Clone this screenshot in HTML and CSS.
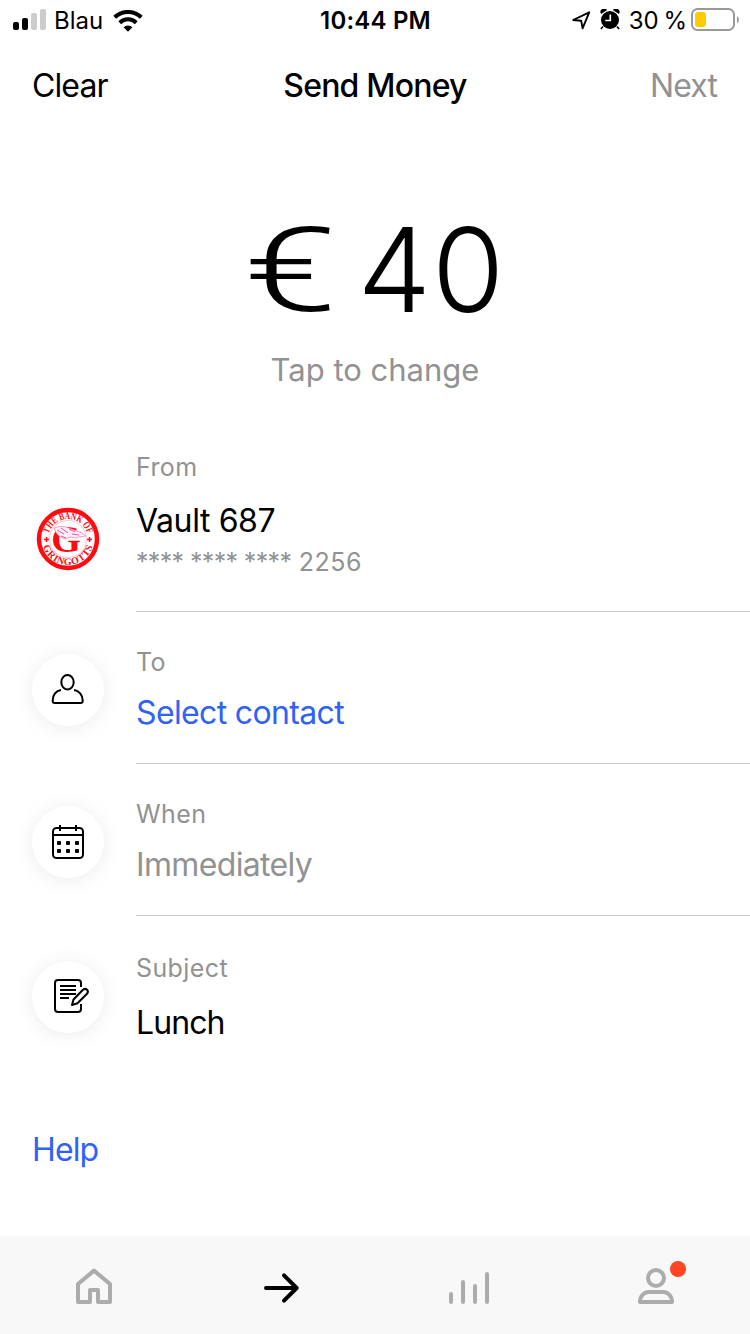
FILE: index.html
```html
<!DOCTYPE html>
<html lang="en">
<head>
<meta charset="utf-8">
<title>Send Money</title>
<link rel="stylesheet" href="styles.css">
</head>
<body>
<div class="screen">
  <div class="status">
    <div class="status-left">
      <svg class="signal" width="34" height="22" viewBox="0 0 34 22"><rect x="0" y="13" width="6" height="8" rx="2"/><rect x="9" y="9" width="6" height="12" rx="2"/><g fill="#ccc"><rect x="18" y="4" width="6" height="17" rx="2"/><rect x="27" y="0" width="6" height="21" rx="2"/></g></svg>
      <span class="carrier">Blau</span>
      <svg class="wifi" width="30" height="22" viewBox="0 0 30 22"><g fill="none" stroke="#000" stroke-width="4"><path d="M1.7 7.3A19.2 19.2 0 0 1 28.3 7.3"/><path d="M6.7 12.7A12 12 0 0 1 23.3 12.7"/></g><path d="M10.6 17.2a6.4 6.4 0 0 1 8.8 0L15 21.8z"/></svg>
    </div>
    <span class="time">10:44 PM</span>
    <div class="status-right">
      <svg class="location" width="19" height="19" viewBox="0 0 19 19" fill="none" stroke="#000" stroke-width="1.9" stroke-linejoin="round"><path d="M1.2 9 17.2 1.3 10.6 17.3 9.2 9.8z"/></svg>
      <svg class="alarm" width="20" height="21" viewBox="0 0 20 21"><path d="M1.1 5.1A3.6 3.6 0 0 1 7.1 1.1M18.9 5.1A3.6 3.6 0 0 0 12.9 1.1"/><circle cx="10" cy="11" r="9"/><path d="M3 17.5.9 20M17 17.5l2.1 2.5" stroke="#000" stroke-width="1.6"/><path d="M10.3 5.5v6H5.3" fill="none" stroke="#fff" stroke-width="1.6"/></svg>
      <span class="percent">30 %</span>
      <svg class="battery" width="50" height="24" viewBox="0 0 50 24"><rect x="1" y="1" width="42" height="21" rx="5.5" fill="none" stroke="#999" stroke-width="2"/><rect x="4" y="4" width="11" height="15" rx="3" fill="#fc0"/><path d="M46 8q2 1 2 3.5T46 15z" fill="#999"/></svg>
    </div>
  </div>

  <header class="nav">
    <a class="clear">Clear</a>
    <h1 class="title">Send Money</h1>
    <a class="next">Next</a>
  </header>

  <section class="amount">
    <div class="sum"><span class="euro">€</span><span>40</span></div>
    <div class="hint">Tap to change</div>
  </section>

  <main class="rows">
    <div class="row row-from">
      <svg class="logo" width="64" height="64" viewBox="0 0 64 64">
        <defs><path id="arc-top" d="M12 32a20 20 0 0 1 40 0"/><path id="arc-bottom" d="M6 32a26 26 0 0 0 52 0"/></defs>
        <circle cx="32" cy="32" r="29" fill="#fff" stroke="#ff0a10" stroke-width="4.5"/>
        <circle cx="32" cy="32" r="18.5" fill="none" stroke="#ffc4dc" stroke-width="1"/>
        <g class="seal"><text><textPath href="#arc-top" startOffset="50%" text-anchor="middle" textLength="52" lengthAdjust="spacingAndGlyphs">THE BANK OF</textPath></text>
        <text><textPath href="#arc-bottom" startOffset="50%" text-anchor="middle" textLength="66">GRINGOTTS</textPath></text>
        <text class="initial" x="30" y="45" text-anchor="middle">G</text></g>
        <path d="M8 32.5h5M10.5 30v5M51 32.5h5M53.5 30v5" stroke="#ff0a10" stroke-width="1.5"/>
        <path d="M18 21q6-3 12-1l8 3q8 2 12 6l-7 1q-5 2-9 0l-5 2q-8-2-11-11z" fill="#fff0f8" stroke="#ff86ae" stroke-width=".8"/>
        <path d="M21 23l7 4M25 21l7 5M33 22l6 3M25 29l5 2M36 27l7 1" stroke="#f04cb0" stroke-width="1"/>
      </svg>
      <div class="body">
        <div class="label">From</div>
        <div class="value vault">Vault 687</div>
        <div class="number"><span class="mask">**** **** ****</span> 2256</div>
      </div>
    </div>
    <div class="row">
      <div class="bubble"><svg width="36" height="36" viewBox="0 0 36 36"><ellipse cx="17.5" cy="10.2" rx="6.2" ry="7.2"/><path d="M11 18C6 18.5 2.7 23 2.7 28.5V29q0 2 2 2h26q2 0 2-2v-.5C32.7 23 29 18.5 24 18"/></svg></div>
      <div class="body">
        <div class="label">To</div>
        <div class="value link">Select contact</div>
      </div>
    </div>
    <div class="row">
      <div class="bubble"><svg width="36" height="36" viewBox="0 0 36 36"><rect x="3" y="4" width="30" height="30" rx="3.5"/><path d="M3 11h30M10 1v6M26 1v6"/><g class="dots"><rect x="7" y="17" width="4" height="4" rx="1"/><rect x="16" y="17" width="4" height="4" rx="1"/><rect x="25" y="17" width="4" height="4" rx="1"/><rect x="7" y="25" width="4" height="4" rx="1"/><rect x="16" y="25" width="4" height="4" rx="1"/><rect x="25" y="25" width="4" height="4" rx="1"/></g></svg></div>
      <div class="body">
        <div class="label">When</div>
        <div class="value muted">Immediately</div>
      </div>
    </div>
    <div class="row row-subject">
      <div class="bubble"><svg width="36" height="36" viewBox="0 0 36 36"><path d="M31 8V4q0-3-3-3H8Q5 1 5 4v26q0 3 3 3h20q3 0 3-3v-5"/><path d="M10 7h16M10 11h16M10 15h16M10 19h9"/><path d="M22 26 23.5 20.5 33 10.8q2.2-1.8 4 0t0 4L27.5 24.3z"/></svg></div>
      <div class="body">
        <div class="label">Subject</div>
        <div class="value lunch">Lunch</div>
      </div>
    </div>
  </main>

  <a class="help">Help</a>

  <nav class="tabs">
    <a class="tab"><svg width="40" height="40" viewBox="0 0 40 40"><path d="M4 18 20 4.6 36 18V36H24V24h-8v12H4z"/></svg></a>
    <a class="tab active"><svg width="40" height="40" viewBox="0 0 40 40"><path d="M5 22h30.7M23 9.3 35.7 22 23 34.7"/></svg></a>
    <a class="tab"><svg width="44" height="40" viewBox="0 0 44 40"><path d="M4 28v8M16 16v20M28 20v16M40 8v28"/></svg></a>
    <a class="tab"><svg width="40" height="40" viewBox="0 0 40 40"><circle cx="20" cy="12" r="8"/><path d="M4 36c0-6 4-10 9-10h14c5 0 9 4 9 10z"/></svg><i class="badge"></i></a>
  </nav>
</div>
</body>
</html>
```
FILE: styles.css
```css
* { box-sizing: border-box; }
body { margin: 0; background: #fff; font-family: Inter, "Liberation Sans", sans-serif; color: #000; }
svg { display: block; flex: none; }
.screen { width: 750px; height: 1334px; display: flex; flex-direction: column; overflow: hidden; }

.status { height: 41px; flex: none; display: grid; grid-template-columns: 1fr auto 1fr; align-items: center; padding: 0 9px 0 13px; font-size: 24px; line-height: 41px; }
.status-left, .status-right { display: flex; align-items: center; white-space: nowrap; }
.status-right { justify-content: flex-end; }
.signal { margin-top: -2px; }
.carrier { margin-left: 7px; }
.wifi { margin-left: 10px; }
.time { font-weight: 600; letter-spacing: .2px; margin-left: -3px; }
.alarm { margin: -2px 0 0 9px; }
.percent { margin-left: 9px; word-spacing: -2px; }
.battery { margin-left: 4px; margin-top: -1px; }

.nav { height: 88px; flex: none; display: grid; grid-template-columns: 1fr auto 1fr; padding: 1px 33px 0 33px; font-size: 32px; line-height: 88px; letter-spacing: -.9px; }
.clear { margin-left: -1px; }
.title { margin: 0; font-size: 32px; font-weight: 500; letter-spacing: -.8px; }
.next { text-align: right; color: #929292; }

.amount { height: 288px; flex: none; display: flex; flex-direction: column; align-items: center; padding-top: 71px; }
.sum { display: flex; height: 140px; font-size: 117px; font-weight: 300; line-height: 140px; letter-spacing: 1px; }
.euro { font-family: Roboto, sans-serif; font-size: 117px; letter-spacing: 0; transform: scaleX(1.44); margin: 1px 35px 0 13px; }
.hint { margin-top: 10px; font-size: 31px; line-height: 40px; color: #929292; }

.row { display: flex; height: 152px; }
.row-from { height: 195px; }
.row-subject { height: 158px; }
.logo { margin: 90px 36px 0 36px; }
.seal { font: 700 10px "Liberation Serif", serif; fill: #ff0a10; }
.initial { font-size: 38px; }
.bubble { width: 72px; height: 72px; flex: none; margin: 42px 32px 0 32px; border-radius: 50%; background: #fff; box-shadow: 0 2px 20px rgba(0, 0, 0, .08); display: grid; place-items: center; }
.bubble svg { fill: none; stroke: #000; stroke-width: 2; stroke-linecap: butt; stroke-linejoin: round; overflow: visible; }
.bubble .dots { fill: #000; stroke: none; }
.body { flex: 1; padding-top: 35px; border-bottom: 1px solid #c8c8c8; white-space: nowrap; }
.label { font-size: 25px; line-height: 30px; letter-spacing: .4px; color: #929292; }
.value { margin-top: 16px; font-size: 32px; line-height: 40px; letter-spacing: -.65px; }
.vault { margin-top: 19px; letter-spacing: -.4px; }
.number { margin-top: 6px; font-size: 25px; line-height: 30px; letter-spacing: .5px; color: #929292; }
.mask { letter-spacing: -.65px; }
.link { color: #2f62f5; }
.muted { color: #929292; }
.row-subject .bubble { margin-top: 45px; }
.row-subject .body { padding-top: 37px; border: 0; }
.lunch { margin-top: 20px; letter-spacing: -.9px; }

.help { margin: 56px 0 0 32px; font-size: 32px; line-height: 40px; letter-spacing: -.9px; color: #2f62f5; }
.tabs { margin-top: auto; height: 98px; flex: none; display: grid; grid-template-columns: repeat(4, 1fr); background: #f8f8f8; }
.tab { position: relative; display: flex; justify-content: center; padding-top: 30px; }
.tab svg { fill: none; stroke: #acacac; stroke-width: 4; stroke-linecap: round; stroke-linejoin: round; }
.active svg { stroke: #000; }
.badge { position: absolute; left: 107px; top: 25px; width: 16px; height: 16px; border-radius: 50%; background: #ff4622; }
```
